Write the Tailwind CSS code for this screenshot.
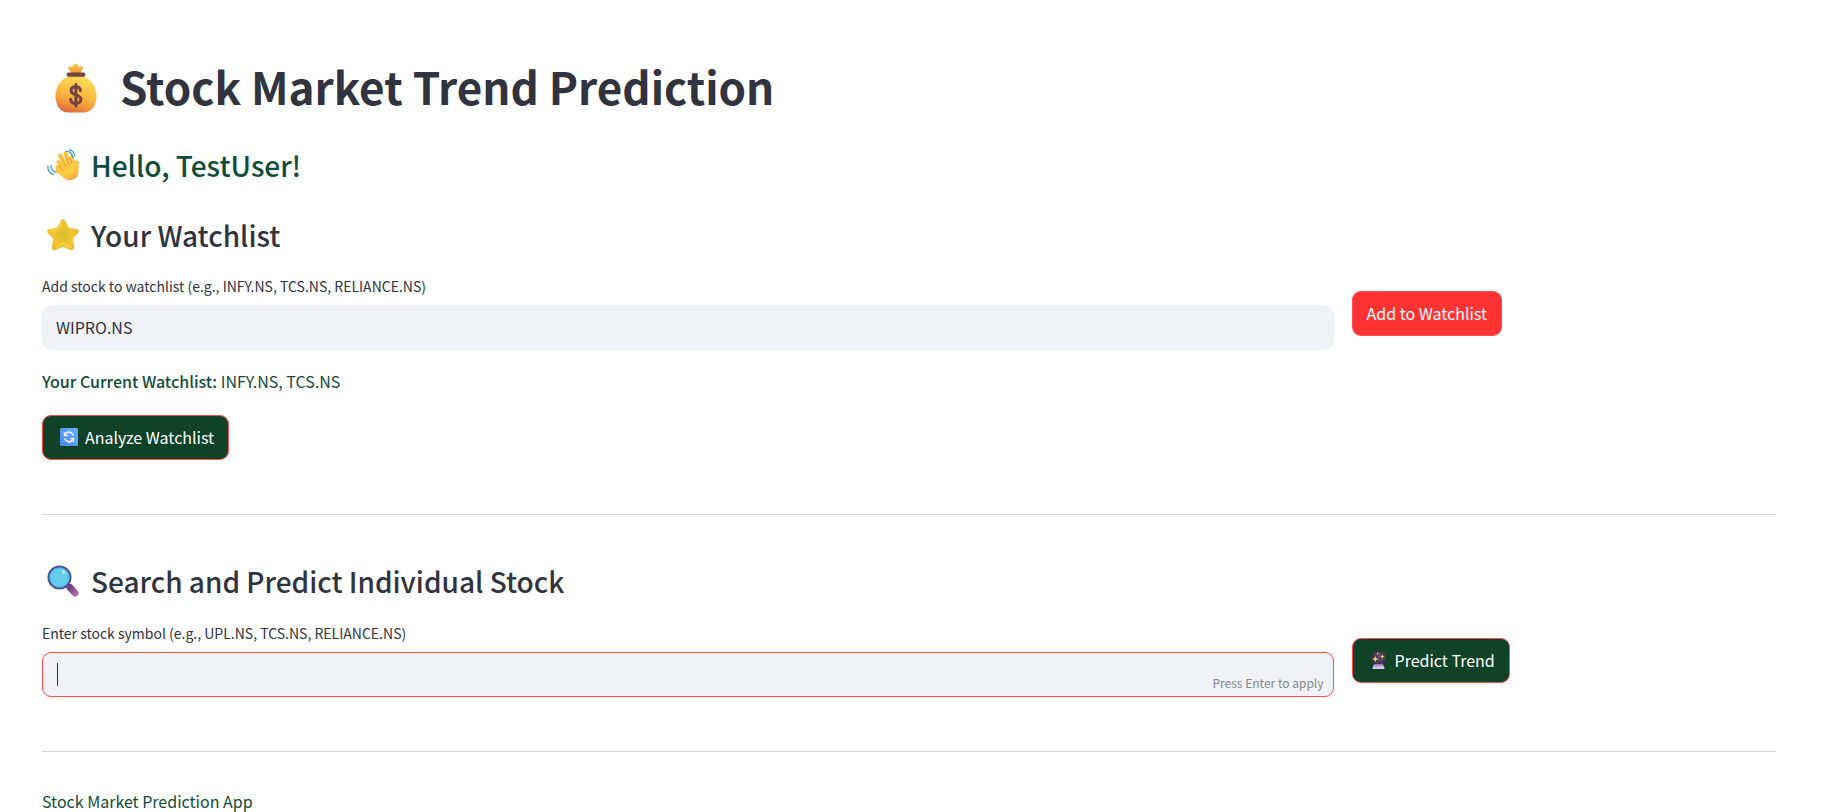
<!DOCTYPE html>
<html lang="en">
<head>
<meta charset="utf-8">
<meta name="viewport" content="width=device-width, initial-scale=1">
<title>Stock Market Trend Prediction</title>
<script src="https://cdn.jsdelivr.net/npm/@tailwindcss/browser@4"></script>
</head>
<body class="bg-white font-['Noto_Sans_CJK_SC','Noto_Sans',sans-serif] text-base leading-6 text-[#31333f]">
<main class="flex flex-col pt-14 pr-[71px] pl-[42px]">
  <h1 class="flex items-center text-[44px] leading-[60px] font-bold">
    <svg class="mt-1 mr-[23px] ml-[13px] h-[50px] w-[42px] shrink-0" viewBox="0 0 42 50" aria-hidden="true">
      <defs>
        <linearGradient id="bag" x1="0.65" y1="0.1" x2="0.35" y2="1"><stop offset="0" stop-color="#ffd855"/><stop offset="0.5" stop-color="#f8b540"/><stop offset="0.8" stop-color="#ed8e3c"/><stop offset="1" stop-color="#d9683c"/></linearGradient>
        <linearGradient id="tie" x1="0" y1="0" x2="0" y2="1"><stop offset="0" stop-color="#ffc84a"/><stop offset="1" stop-color="#ee9538"/></linearGradient>
      </defs>
      <path d="M16.500 11C16 8 13 6 13.300 4.200c.3-1.400 2-.7 3.700-.2C18 2 19.500.7 20.700.7S23.500 2 24.300 4c1.700-.5 3.600-1.300 3.900 0 .3 1.800-2.500 4-3.200 7z" fill="url(#tie)"/>
      <path d="M15.500 13C6 15.500 .5 23.500 .5 33c0 11 6 16.500 13 16.500h15c7 0 13-5.500 13-16.500 0-9.500-5.500-17.500-15-20z" fill="url(#bag)"/>
      <rect x="11.500" y="9.500" width="19" height="4.300" rx="2" fill="#754342"/>
      <path d="M25.500 27.500c-.5-2.500-2.300-3.700-4.700-3.700-2.800 0-4.700 1.500-4.700 3.900 0 5.400 9.800 2.800 9.800 8.600 0 2.600-2.100 4.200-5 4.200-3 0-5-1.500-5.300-4.200M20.900 21.500v21.500" fill="none" stroke="#754342" stroke-width="3" stroke-linecap="round"/>
    </svg>
    <span>Stock Market Trend Prediction</span>
  </h1>

  <h2 class="mt-[31px] flex items-center text-[28px] leading-9 font-medium text-[#0f4c3a]">
    <svg class="mr-3 ml-[5px] h-8 w-8 shrink-0" viewBox="0 0 32 32" aria-hidden="true">
      <defs><linearGradient id="palm" x1="0" y1="0" x2="0.8" y2="1"><stop offset="0" stop-color="#ffb83a"/><stop offset="0.6" stop-color="#ffce45"/><stop offset="1" stop-color="#f4a33e"/></linearGradient></defs>
      <g fill="none" stroke="url(#palm)" stroke-width="4.200" stroke-linecap="round">
        <path d="M11.500 13l6 7M13.200 6.800l7 11M18.500 4.800l5 12M24.500 8l2 9M10.500 18l6 6"/>
        <path d="M29.700 13.500l-1.500 8"/>
      </g>
      <path d="M12 15l14-2.500 5.500 2c-.5 3 1 7-.6 11.500C29 31 22 32.800 17.500 29.500L8.800 22.500c-1.400-1.700.5-4 2.500-3.200z" fill="url(#palm)"/>
      <path d="M14.500 10.500l5 7M18.300 8l3.700 7.500M23 9l2 6M12 17l4 4" stroke="#e88b35" stroke-width=".8" fill="none"/>
      <path d="M18.500 2.500c4-.5 6.500 2 7.500 6M22 .8c3.500.5 5.300 3 5.500 6M4 16.500c-.3 3 1.500 5.500 5 7M1 17c-.5 4.500 2 7.500 5.500 8.500" fill="none" stroke="#3c91cb" stroke-width="1.200" stroke-linecap="round"/>
    </svg>
    <span>Hello, TestUser!</span>
  </h2>

  <section class="flex flex-col">
    <h2 class="mt-[34px] flex items-center text-[28px] leading-9 font-medium">
      <svg class="mr-3 ml-[5px] h-8 w-8 shrink-0" viewBox="0 0 32 32" aria-hidden="true">
        <defs><radialGradient id="star"><stop offset="0" stop-color="#d8bd2d"/><stop offset="0.65" stop-color="#f2c62f"/><stop offset="1" stop-color="#f5b93a"/></radialGradient></defs>
        <path d="M13.900 1.700c.9-1.900 3.400-1.900 4.300 0l3.700 7.100 7.700 1.100c2.200.3 3 2.900 1.400 4.400l-5.100 5.400 1.300 8.600c.4 2.200-1.900 3.700-3.800 2.700L16 27.900l-7.400 3.100c-1.900 1-4.200-.5-3.800-2.700l1.300-8.600-5.100-5.400c-1.500-1.500-.7-4.100 1.400-4.400l7.800-1.100z" fill="url(#star)"/>
        <path d="M15 3.500l-3.800 7-7.500 1.700M24 28.500L16.500 24.500l-7 3.800" fill="none" stroke="#ffe15b" stroke-width="1.200" stroke-linecap="round" opacity=".6"/>
      </svg>
      <span>Your Watchlist</span>
    </h2>
    <form class="mt-[21px] flex items-start gap-[18px]">
      <div class="flex grow basis-[calc(75%-18px)] flex-col gap-[7px]">
        <label for="add-stock" class="text-sm leading-6">Add stock to watchlist (e.g., INFY.NS, TCS.NS, RELIANCE.NS)</label>
        <input id="add-stock" type="text" value="WIPRO.NS" class="h-[45px] w-full rounded-[9px] bg-[#f0f2f6] px-[14px] pb-[2px] text-base leading-6 outline-none">
      </div>
      <div class="grow basis-[calc(25%-18px)] pt-[17px]">
        <button type="button" class="h-[45px] rounded-[9px] border border-[#ff4b4b] bg-[#ff3333] px-[14px] pb-[2px] text-white">Add to Watchlist</button>
      </div>
    </form>
    <p class="mt-[19px] text-[#0f4c3a]"><strong class="font-medium">Your Current Watchlist:</strong> INFY.NS, TCS.NS</p>
    <button type="button" class="mt-[22px] flex h-[45px] items-center gap-[7px] self-start rounded-[9px] border border-[#ff4b4b] bg-[#0f4229] pr-[14px] pb-[2px] pl-[17px] text-white">
      <svg class="size-[18px]" viewBox="0 0 18 18" aria-hidden="true">
        <defs><linearGradient id="sync" x1="1" y1="0" x2="0" y2="1"><stop offset="0" stop-color="#62b5ff"/><stop offset="1" stop-color="#4b85e8"/></linearGradient></defs>
        <rect width="18" height="18" rx="1.500" fill="url(#sync)"/>
        <path d="M5.500 5.600C8 3.300 12 4 13.300 7.500M12.500 12.500C10 14.700 6 14 4.700 10.500" fill="none" stroke="#f0eaff" stroke-width="1.900"/>
        <path d="M3.800 3.700v4.500h4.500zM14.200 14.300V9.800H9.700z" fill="#f0eaff"/>
      </svg>
      <span>Analyze Watchlist</span>
    </button>
  </section>

  <hr class="mt-[54px] border-t border-[#d6d6d8]">

  <section class="flex flex-col">
    <h2 class="mt-12 flex items-center text-[28px] leading-9 font-medium">
      <svg class="mr-3 ml-[5px] h-8 w-8 shrink-0" viewBox="0 0 32 32" aria-hidden="true">
        <defs><linearGradient id="grip" x1="0" y1="0" x2="1" y2="1"><stop offset="0" stop-color="#6d4080"/><stop offset="1" stop-color="#a764a0"/></linearGradient></defs>
        <path d="M19 19l4 4" stroke="#77618d" stroke-width="2.500"/>
        <path d="M23 22.500l5 5.500" stroke="url(#grip)" stroke-width="7" stroke-linecap="round"/>
        <circle cx="12.500" cy="12.500" r="11" fill="#62cced" stroke="#4c518f" stroke-width="2"/>
        <circle cx="12.500" cy="12.500" r="9.700" fill="none" stroke="#40aee5" stroke-width=".8"/>
        <ellipse cx="16.700" cy="7" rx="1.600" ry="2.200" fill="#b6e5f9" transform="rotate(-35 16.700 7)"/>
      </svg>
      <span>Search and Predict Individual Stock</span>
    </h2>
    <form class="mt-[22px] flex items-start gap-[18px]">
      <div class="flex grow basis-[calc(75%-18px)] flex-col gap-[7px]">
        <label for="symbol" class="text-sm leading-6">Enter stock symbol (e.g., UPL.NS, TCS.NS, RELIANCE.NS)</label>
        <div class="relative">
          <input id="symbol" type="text" aria-describedby="hint" class="block h-[45px] w-full rounded-[9px] border border-[#ff4b4b] bg-[#f0f2f6] px-[14px] text-base leading-6 outline-none">
          <span class="absolute top-[11px] left-[15px] h-[23px] w-px bg-[#31333f]"></span>
          <span id="hint" class="absolute right-[10px] bottom-[5px] text-xs leading-[18px] text-[#85878f]">Press Enter to apply</span>
        </div>
      </div>
      <div class="grow basis-[calc(25%-18px)] pt-[17px]">
        <button type="button" class="flex h-[45px] items-center gap-[7px] rounded-[9px] border border-[#ff4b4b] bg-[#0f4229] pr-[14px] pb-[2px] pl-[17px] text-white">
          <svg class="size-[18px]" viewBox="0 0 18 18" aria-hidden="true">
            <defs><radialGradient id="orb" cx=".6" cy=".4"><stop offset="0" stop-color="#65516f"/><stop offset="1" stop-color="#3e3048"/></radialGradient><linearGradient id="base" x1="0" y1="0" x2="0" y2="1"><stop offset="0" stop-color="#b184ce"/><stop offset="1" stop-color="#e6d8ed"/></linearGradient></defs>
            <circle cx="8.500" cy="7.500" r="7.500" fill="url(#orb)"/>
            <path d="M4 13.300h9l1.400 3.200c.3.900-.2 1.500-1 1.500H3.600c-.8 0-1.300-.6-1-1.500z" fill="url(#base)"/>
            <path d="M5.300 5l.9 2.200 2.200.9-2.200.9-.9 2.200-.9-2.200-2.200-.9 2.200-.9zM12.300 3.500l.6 1.500 1.500.6-1.500.6-.6 1.500-.6-1.500-1.500-.6 1.500-.6zM7.800 1.200l.4 1 1 .4-1 .4-.4 1-.4-1-1-.4 1-.4z" fill="#ffd06a"/>
          </svg>
          <span>Predict Trend</span>
        </button>
      </div>
    </form>
  </section>

  <hr class="mt-[54px] border-t border-[#d6d6d8]">
  <p class="mt-[37px] text-[#0f4c3a]">Stock Market Prediction App</p>
</main>
</body>
</html>
